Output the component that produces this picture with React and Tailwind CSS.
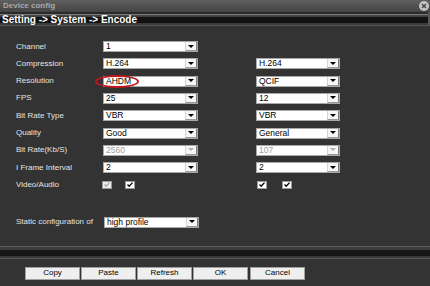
import React from "react";

function Arrow({ disabled }) {
  return (
    <div className="w-[12px] h-full flex items-center justify-center border-l border-[#d4d4d4] border-r border-r-[#7a7a7a] border-b border-b-[#9a9a9a] bg-[#f6f6f6]">
      <div
        className={
          "w-0 h-0 border-l-[3px] border-r-[3px] border-t-[3px] border-l-transparent border-r-transparent " +
          (disabled ? "border-t-[#b0b0b0]" : "border-t-black")
        }
      />
    </div>
  );
}

function Select({ value, w = "w-[95px]", disabled }) {
  return (
    <div className={"h-[11px] bg-white border border-[#a8a8a8] flex items-stretch " + w}>
      <span
        className={
          "flex-1 pl-[2px] text-[8.5px] leading-[9px] " + (disabled ? "text-[#a0a0a0]" : "text-black")
        }
      >
        {value}
      </span>
      <Arrow disabled={disabled} />
    </div>
  );
}

function Check({ disabled }) {
  return (
    <div
      className={
        "w-[10px] h-[8px] border border-[#9a9a9a] flex items-center justify-center " +
        (disabled ? "bg-[#ececec]" : "bg-white")
      }
    >
      <svg width="6" height="5" viewBox="0 0 6 5">
        <polyline
          points="0.5,2.5 2.2,4.2 5.5,0.6"
          fill="none"
          stroke={disabled ? "#a8a8a8" : "#000"}
          strokeWidth="1.4"
        />
      </svg>
    </div>
  );
}

const rows = [
  { label: "Channel", left: "1" },
  { label: "Compression", left: "H.264", right: "H.264" },
  { label: "Resolution", left: "AHDM", right: "QCIF" },
  { label: "FPS", left: "25", right: "12" },
  { label: "Bit Rate Type", left: "VBR", right: "VBR" },
  { label: "Quality", left: "Good", right: "General" },
  { label: "Bit Rate(Kb/S)", left: "2560", right: "107", disabled: true },
  { label: "I Frame Interval", left: "2", right: "2" },
];

function Button({ children }) {
  return (
    <div className="w-[55px] h-[13px] bg-[#efefef] border border-[#a0a0a0] flex items-center justify-center text-[8px] text-black leading-none">
      {children}
    </div>
  );
}

export default function App() {
  return (
    <div className="relative w-[430px] h-[286px] overflow-hidden bg-[#333333] font-['Liberation_Sans',Arial,sans-serif]">
      {/* title bar */}
      <div className="h-[12px] bg-gradient-to-b from-[#606060] to-[#444444] flex items-center justify-between pl-[3px] pr-[1px]">
        <span className="text-[8px] font-bold text-[#a8a8a8] leading-none">Device config</span>
        <div className="w-[10px] h-[10px] rounded-full bg-[#c4c4c4] flex items-center justify-center">
          <svg width="6" height="6" viewBox="0 0 6 6">
            <path d="M1 1L5 5M5 1L1 5" stroke="#444" strokeWidth="1.4" />
          </svg>
        </div>
      </div>
      {/* header bar */}
      <div className="h-[14px] bg-[linear-gradient(to_bottom,#2a2a2a_0px,#2a2a2a_2px,#7a7a7a_2px,#7a7a7a_3px,#4a4a4a_3px,#3a3a3a_5px,#121212_5px,#121212_11px,#3a3a3a_11px,#3a3a3a_13px,#555555_13px)] flex items-center pl-[2px] pt-[1px] border-r-2 border-[#555]">
        <span className="text-[10px] font-bold text-white leading-none">Setting -&gt; System -&gt; Encode</span>
      </div>

      {/* content */}
      <div className="pt-[15px] pl-[16px] flex flex-col">
        {rows.map((r) => (
          <div key={r.label} className="h-[17.33px] flex items-start">
            <div className="w-[87px] h-[11px] flex items-center text-[8px] text-[#e4e4e4] leading-none">
              {r.label}
            </div>
            <Select value={r.left} disabled={r.disabled} />
            {r.right && (
              <div className="ml-[58px]">
                <Select value={r.right} w="w-[84px]" disabled={r.disabled} />
              </div>
            )}
          </div>
        ))}
        <div className="h-[17.33px] flex items-start">
          <div className="w-[87px] h-[11px] flex items-center text-[8px] text-[#e4e4e4] leading-none">
            Video/Audio
          </div>
          <div className="flex gap-[13px] mt-[1px] -ml-[1px]">
            <Check disabled />
            <Check />
          </div>
          <div className="flex gap-[15px] mt-[1px] ml-[122px]">
            <Check />
            <Check />
          </div>
        </div>

        <div className="mt-[20px] flex items-center">
          <div className="w-[88px] text-[8px] text-[#e4e4e4] leading-none">Static configuration of</div>
          <Select value="high profile" />
        </div>
      </div>

      {/* separator */}
      <div className="mt-[18px] h-[13px] flex flex-col">
        <div className="h-[1px] bg-[#5e5e5e]" />
        <div className="h-[3px] bg-[#3c3c3c]" />
        <div className="h-[6px] bg-[#171717]" />
        <div className="h-[2px] bg-[#3a3a3a]" />
        <div className="h-[1px] bg-[#585858]" />
      </div>

      {/* buttons */}
      <div className="mt-[8px] pl-[25px] flex gap-[1px]">
        <Button>Copy</Button>
        <Button>Paste</Button>
        <Button>Refresh</Button>
        <Button>OK</Button>
        <div className="ml-[1px]">
          <Button>Cancel</Button>
        </div>
      </div>

      {/* red highlight ellipse */}
      <div className="absolute left-[95px] top-[75px] w-[44px] h-[13px] rounded-[50%] border-2 border-[#c8161d]" />
    </div>
  );
}
